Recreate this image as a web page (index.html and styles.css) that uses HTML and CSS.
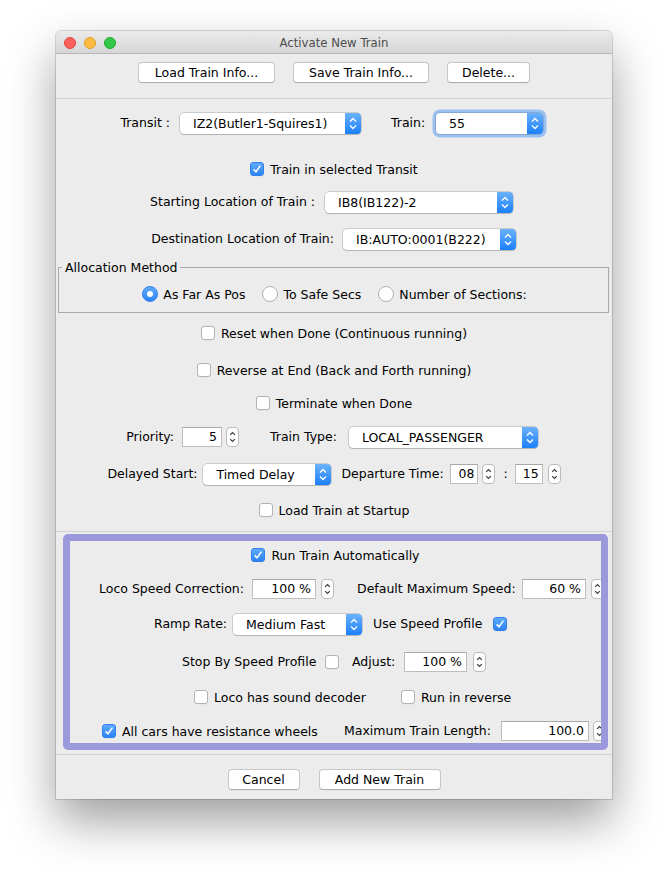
FILE: index.html
```html
<!DOCTYPE html>
<html>
<head>
<meta charset="utf-8">
<title>Activate New Train</title>
<link rel="stylesheet" href="styles.css">
</head>
<body>
<div class="window">
  <div class="titlebar">
    <div class="lights">
      <span class="light red"></span>
      <span class="light yellow"></span>
      <span class="light green"></span>
    </div>
    <div class="title">Activate New Train</div>
    <div></div>
  </div>

  <div class="content">
    <div class="toolbar">
      <button class="btn btn-load">Load Train Info...</button>
      <button class="btn btn-save">Save Train Info...</button>
      <button class="btn btn-delete">Delete...</button>
    </div>
    <div class="sep"></div>

    <div class="row row-transit">
      <span class="lbl lbl-transit">Transit :</span>
      <div class="combo combo-transit"><span class="combo-text">IZ2(Butler1-Squires1)</span><span class="combo-arrow"><svg width="16" height="21" viewBox="0 0 16 21"><path d="M5 8.5 8 5.5 11 8.5M5 12.5 8 15.5 11 12.5" fill="none" stroke="#fff" stroke-width="1.3"/></svg></span></div>
      <span class="lbl lbl-train">Train:</span>
      <div class="combo combo-train focused"><span class="combo-text">55</span><span class="combo-arrow"><svg width="16" height="21" viewBox="0 0 16 21"><path d="M5 8.5 8 5.5 11 8.5M5 12.5 8 15.5 11 12.5" fill="none" stroke="#fff" stroke-width="1.3"/></svg></span></div>
    </div>

    <div class="row row-trainsel">
      <label class="check"><span class="cb on"><svg width="12" height="12" viewBox="0 0 12 12"><path d="M2.6 6.4 5 8.8 9.4 2.6" fill="none" stroke="#fff" stroke-width="1.5"/></svg></span><span>Train in selected Transit</span></label>
    </div>

    <div class="row row-start">
      <span class="lbl lbl-start">Starting Location of Train :</span>
      <div class="combo combo-start"><span class="combo-text">IB8(IB122)-2</span><span class="combo-arrow"><svg width="16" height="21" viewBox="0 0 16 21"><path d="M5 8.5 8 5.5 11 8.5M5 12.5 8 15.5 11 12.5" fill="none" stroke="#fff" stroke-width="1.3"/></svg></span></div>
    </div>

    <div class="row row-dest">
      <span class="lbl lbl-dest">Destination Location of Train:</span>
      <div class="combo combo-dest"><span class="combo-text">IB:AUTO:0001(B222)</span><span class="combo-arrow"><svg width="16" height="21" viewBox="0 0 16 21"><path d="M5 8.5 8 5.5 11 8.5M5 12.5 8 15.5 11 12.5" fill="none" stroke="#fff" stroke-width="1.3"/></svg></span></div>
    </div>

    <div class="group">
      <span class="group-title">Allocation Method</span>
      <div class="row row-radios">
        <label class="radio"><span class="rb on"><span class="dot"></span></span><span>As Far As Pos</span></label>
        <label class="radio"><span class="rb"></span><span>To Safe Secs</span></label>
        <label class="radio"><span class="rb"></span><span>Number of Sections:</span></label>
      </div>
    </div>

    <div class="row row-reset">
      <label class="check"><span class="cb"></span><span>Reset when Done (Continuous running)</span></label>
    </div>
    <div class="row row-reverse">
      <label class="check"><span class="cb"></span><span>Reverse at End (Back and Forth running)</span></label>
    </div>
    <div class="row row-terminate">
      <label class="check"><span class="cb"></span><span>Terminate when Done</span></label>
    </div>

    <div class="row row-priority">
      <span class="lbl lbl-priority">Priority:</span>
      <span class="field field-priority">5</span>
      <span class="spin"><svg width="11" height="18" viewBox="0 0 11 18"><path d="M3.2 6.8 5.5 4.5 7.8 6.8M3.2 11.2 5.5 13.5 7.8 11.2" fill="none" stroke="#333" stroke-width="1.1"/></svg></span>
      <span class="lbl lbl-type">Train Type:</span>
      <div class="combo combo-type"><span class="combo-text">LOCAL_PASSENGER</span><span class="combo-arrow"><svg width="16" height="21" viewBox="0 0 16 21"><path d="M5 8.5 8 5.5 11 8.5M5 12.5 8 15.5 11 12.5" fill="none" stroke="#fff" stroke-width="1.3"/></svg></span></div>
    </div>

    <div class="row row-delay">
      <span class="lbl lbl-delay">Delayed Start:</span>
      <div class="combo combo-delay"><span class="combo-text">Timed Delay</span><span class="combo-arrow"><svg width="16" height="21" viewBox="0 0 16 21"><path d="M5 8.5 8 5.5 11 8.5M5 12.5 8 15.5 11 12.5" fill="none" stroke="#fff" stroke-width="1.3"/></svg></span></div>
      <span class="lbl lbl-dep">Departure Time:</span>
      <span class="field field-time">08</span>
      <span class="spin"><svg width="11" height="18" viewBox="0 0 11 18"><path d="M3.2 6.8 5.5 4.5 7.8 6.8M3.2 11.2 5.5 13.5 7.8 11.2" fill="none" stroke="#333" stroke-width="1.1"/></svg></span>
      <span class="lbl colon">:</span>
      <span class="field field-time">15</span>
      <span class="spin spin-min"><svg width="11" height="18" viewBox="0 0 11 18"><path d="M3.2 6.8 5.5 4.5 7.8 6.8M3.2 11.2 5.5 13.5 7.8 11.2" fill="none" stroke="#333" stroke-width="1.1"/></svg></span>
    </div>

    <div class="row row-load">
      <label class="check"><span class="cb"></span><span>Load Train at Startup</span></label>
    </div>

    <div class="sep sep-auto"></div>

    <div class="autobox">
      <div class="row row-auto">
        <label class="check"><span class="cb on"><svg width="12" height="12" viewBox="0 0 12 12"><path d="M2.6 6.4 5 8.8 9.4 2.6" fill="none" stroke="#fff" stroke-width="1.5"/></svg></span><span>Run Train Automatically</span></label>
      </div>

      <div class="row row-left row-loco">
        <span class="lbl lbl-loco">Loco Speed Correction:</span>
        <span class="field field-pct">100 %</span>
        <span class="spin"><svg width="11" height="18" viewBox="0 0 11 18"><path d="M3.2 6.8 5.5 4.5 7.8 6.8M3.2 11.2 5.5 13.5 7.8 11.2" fill="none" stroke="#333" stroke-width="1.1"/></svg></span>
        <span class="lbl lbl-maxspeed">Default Maximum Speed:</span>
        <span class="field field-pct">60 %</span>
        <span class="spin"><svg width="11" height="18" viewBox="0 0 11 18"><path d="M3.2 6.8 5.5 4.5 7.8 6.8M3.2 11.2 5.5 13.5 7.8 11.2" fill="none" stroke="#333" stroke-width="1.1"/></svg></span>
      </div>

      <div class="row row-left row-ramp">
        <span class="lbl lbl-ramp">Ramp Rate:</span>
        <div class="combo combo-ramp"><span class="combo-text">Medium Fast</span><span class="combo-arrow"><svg width="16" height="21" viewBox="0 0 16 21"><path d="M5 8.5 8 5.5 11 8.5M5 12.5 8 15.5 11 12.5" fill="none" stroke="#fff" stroke-width="1.3"/></svg></span></div>
        <span class="lbl lbl-profile">Use Speed Profile</span>
        <span class="cb on"><svg width="12" height="12" viewBox="0 0 12 12"><path d="M2.6 6.4 5 8.8 9.4 2.6" fill="none" stroke="#fff" stroke-width="1.5"/></svg></span>
      </div>

      <div class="row row-left row-stop">
        <span class="lbl lbl-stop">Stop By Speed Profile</span>
        <span class="cb"></span>
        <span class="lbl lbl-adjust">Adjust:</span>
        <span class="field field-adjust">100 %</span>
        <span class="spin"><svg width="11" height="18" viewBox="0 0 11 18"><path d="M3.2 6.8 5.5 4.5 7.8 6.8M3.2 11.2 5.5 13.5 7.8 11.2" fill="none" stroke="#333" stroke-width="1.1"/></svg></span>
      </div>

      <div class="row row-left row-sound">
        <label class="check check-sound"><span class="cb"></span><span>Loco has sound decoder</span></label>
        <label class="check"><span class="cb"></span><span>Run in reverse</span></label>
      </div>

      <div class="row row-left row-cars">
        <label class="check check-cars"><span class="cb on"><svg width="12" height="12" viewBox="0 0 12 12"><path d="M2.6 6.4 5 8.8 9.4 2.6" fill="none" stroke="#fff" stroke-width="1.5"/></svg></span><span>All cars have resistance wheels</span></label>
        <span class="lbl lbl-length">Maximum Train Length:</span>
        <span class="field field-length">100.0</span>
        <span class="spin"><svg width="11" height="18" viewBox="0 0 11 18"><path d="M3.2 6.8 5.5 4.5 7.8 6.8M3.2 11.2 5.5 13.5 7.8 11.2" fill="none" stroke="#333" stroke-width="1.1"/></svg></span>
      </div>
    </div>

    <div class="sep sep-bottom"></div>

    <div class="footer">
      <button class="btn btn-cancel">Cancel</button>
      <button class="btn btn-add">Add New Train</button>
    </div>
  </div>
</div>
</body>
</html>
```

FILE: styles.css
```css
* { box-sizing: border-box; }

html, body {
  margin: 0;
  background: #ffffff;
}

body {
  font-family: "DejaVu Sans", sans-serif;
  font-size: 12.5px;
  color: #000;
  padding: 31px 0 80px;
}

.window {
  margin-left: 56px;
  width: 556px;
  background: #ececec;
  border-radius: 5px 5px 0 0;
  box-shadow: 0 0 0 1px rgba(0, 0, 0, 0.14), 0 22px 48px rgba(0, 0, 0, 0.38);
  overflow: hidden;
}

/* ---------- title bar ---------- */
.titlebar {
  height: 23px;
  padding-top: 1px;
  display: grid;
  grid-template-columns: 1fr auto 1fr;
  align-items: center;
  background: linear-gradient(#ebebeb, #d6d6d6);
  border-bottom: 1px solid #b8b8b8;
}

.lights {
  display: flex;
  gap: 8px;
  padding-left: 8px;
}

.light {
  width: 12px;
  height: 12px;
  border-radius: 50%;
}
.red { background: #fc605c; border: 1px solid #e0443e; }
.yellow { background: #fdbc40; border: 1px solid #dea123; }
.green { background: #34c84a; border: 1px solid #1aab29; }

.title {
  font-size: 11.7px;
  color: #4d4d4d;
}

/* ---------- generic controls ---------- */
.btn {
  height: 21px;
  padding: 0;
  font: inherit;
  color: #000;
  background: #fff;
  border: 1px solid #c6c6c6;
  border-bottom-color: #adadad;
  border-radius: 4px;
  box-shadow: 0 0.5px 0 rgba(0, 0, 0, 0.05);
  line-height: 19px;
}

.sep {
  height: 1px;
  background: #d3d3d3;
}

.row {
  height: 22px;
  display: flex;
  align-items: center;
  justify-content: center;
  white-space: nowrap;
}

.row-left { justify-content: flex-start; }

.lbl {
  flex: none;
  line-height: 16px;
}

.check, .radio {
  display: flex;
  align-items: center;
  gap: 6px;
  flex: none;
}
.radio { gap: 5px; }

.cb {
  width: 14px;
  height: 14px;
  flex: none;
  background: #fff;
  border: 1px solid #b3b3b3;
  border-radius: 3px;
  box-shadow: 0 0.5px 0 rgba(0, 0, 0, 0.06);
  display: flex;
  align-items: center;
  justify-content: center;
}
.cb.on {
  background: linear-gradient(#5eabfb, #2c84f6);
  border-color: #2f80ec;
}

.rb {
  width: 16px;
  height: 16px;
  flex: none;
  border-radius: 50%;
  background: #fff;
  border: 1px solid #b3b3b3;
  display: flex;
  align-items: center;
  justify-content: center;
}
.rb.on {
  background: linear-gradient(#5eabfb, #2c84f6);
  border-color: #2f80ec;
}
.dot {
  width: 6px;
  height: 6px;
  border-radius: 50%;
  background: #fff;
}

.combo {
  height: 21px;
  flex: none;
  display: flex;
  background: #fff;
  border-radius: 4px;
  box-shadow: 0 0 0 0.5px rgba(0, 0, 0, 0.28), 0 1px 1px rgba(0, 0, 0, 0.12);
}
.combo-text {
  flex: 1;
  padding-left: 13px;
  line-height: 21px;
}
.combo-arrow {
  width: 16px;
  flex: none;
  border-radius: 0 4px 4px 0;
  background: linear-gradient(#6bb2fc, #1b80fa);
  display: flex;
}
.combo.focused {
  box-shadow: 0 0 0 0.5px rgba(0, 0, 0, 0.25), 0 0 0 3.5px rgba(104, 163, 242, 0.6);
}

.field {
  height: 20px;
  flex: none;
  background: #fff;
  border: 1px solid #bdbdbd;
  border-top-color: #a8a8a8;
  text-align: right;
  padding-right: 4px;
  line-height: 18px;
}

.spin {
  width: 13px;
  height: 20px;
  flex: none;
  margin-left: 4px;
  background: #fff;
  border: 1px solid #bcbcbc;
  border-radius: 4px;
  display: flex;
  align-items: center;
  justify-content: center;
}

/* ---------- toolbar ---------- */
.toolbar {
  display: flex;
  justify-content: center;
  gap: 18px;
  padding: 8px 0 15px;
}
.btn-load { width: 137px; }
.btn-save { width: 136px; }
.btn-delete { width: 83px; }

/* ---------- upper rows ---------- */
.row-transit { margin-top: 13px; padding-right: 6px; }
.lbl-transit { width: 51px; text-align: right; }
.combo-transit { width: 181px; margin-left: 10px; }
.lbl-train { width: 36px; margin-left: 30px; }
.combo-train { width: 107px; margin-left: 9px; }

.row-trainsel { margin-top: 24px; }

.row-start { margin-top: 11px; padding-right: 7px; }
.lbl-start { width: 167px; text-align: right; }
.combo-start { width: 188px; margin-left: 10px; }

.row-dest { margin-top: 15px; padding-right: 6px; }
.lbl-dest { width: 188px; text-align: right; }
.combo-dest { width: 173px; margin-left: 9px; }

/* ---------- allocation group ---------- */
.group {
  margin: 17px 3px 0 2px;
  height: 46px;
  border: 1px solid #a9a9a9;
}
.group-title {
  display: block;
  width: fit-content;
  margin: -8px 0 0 3px;
  padding: 0 3px;
  line-height: 15px;
  background: #ececec;
}
.row-radios {
  margin-top: 8px;
  gap: 17px;
  padding-left: 2px;
}

.row-reset { margin-top: 9px; }
.row-reverse { margin-top: 15px; }
.row-terminate { margin-top: 11px; }

.row-priority { margin-top: 12px; padding-right: 5px; }
.lbl-priority { width: 49px; text-align: right; }
.field-priority { width: 40px; margin-left: 8px; }
.lbl-type { width: 68px; margin-left: 31px; }
.combo-type { width: 189px; margin-left: 11px; }

.row-delay { margin-top: 15px; }
.lbl-delay { width: 87px; text-align: right; }
.combo-delay { width: 128px; margin-left: 9px; }
.lbl-dep { width: 100px; margin-left: 10px; }
.field-time { width: 28px; padding-right: 3px; margin-left: 9px; }
.colon { margin-left: 8px; }
.colon + .field-time { margin-left: 7px; }
.spin-min { margin-left: 5px; }

.row-load { margin-top: 14px; }

.sep-auto { margin-top: 10px; }

/* ---------- automatic running box ---------- */
.autobox {
  margin: 2px 4px 0 7px;
  height: 216px;
  border: 7px solid #9b98dc;
  border-radius: 5px;
  overflow: hidden;
}

.row-auto { margin-top: 3px; }

.row-loco { margin-top: 12px; padding-left: 29px; }
.lbl-loco { width: 144px; }
.field-pct { width: 64px; margin-left: 9px; }
.row-loco .spin { margin-left: 5px; }
.lbl-maxspeed { width: 157px; margin-left: 23px; }
.lbl-maxspeed + .field-pct { margin-left: 8px; }

.row-ramp { margin-top: 13px; padding-left: 84px; }
.lbl-ramp { width: 70px; }
.combo-ramp { width: 129px; margin-left: 9px; }
.lbl-profile { width: 108px; margin-left: 11px; }
.lbl-profile + .cb { margin-left: 12px; }

.row-stop { margin-top: 16px; padding-left: 112px; }
.lbl-stop { width: 131px; }
.lbl-stop + .cb { margin-left: 12px; }
.lbl-adjust { width: 44px; margin-left: 13px; }
.field-adjust { width: 63px; margin-left: 8px; }
.row-stop .spin { margin-left: 6px; }

.row-sound { margin-top: 13px; padding-left: 124px; }
.check-sound { width: 207px; }

.row-cars { margin-top: 12px; padding-left: 32px; }
.check-cars { width: 214px; }
.lbl-length { width: 149px; margin-left: 28px; }
.field-length { width: 88px; margin-left: 8px; }

/* ---------- footer ---------- */
.sep-bottom { margin-top: 4px; }

.footer {
  display: flex;
  justify-content: center;
  gap: 19px;
  padding: 14px 0 9px;
}
.btn-cancel { width: 72px; }
.btn-add { width: 122px; }
```
